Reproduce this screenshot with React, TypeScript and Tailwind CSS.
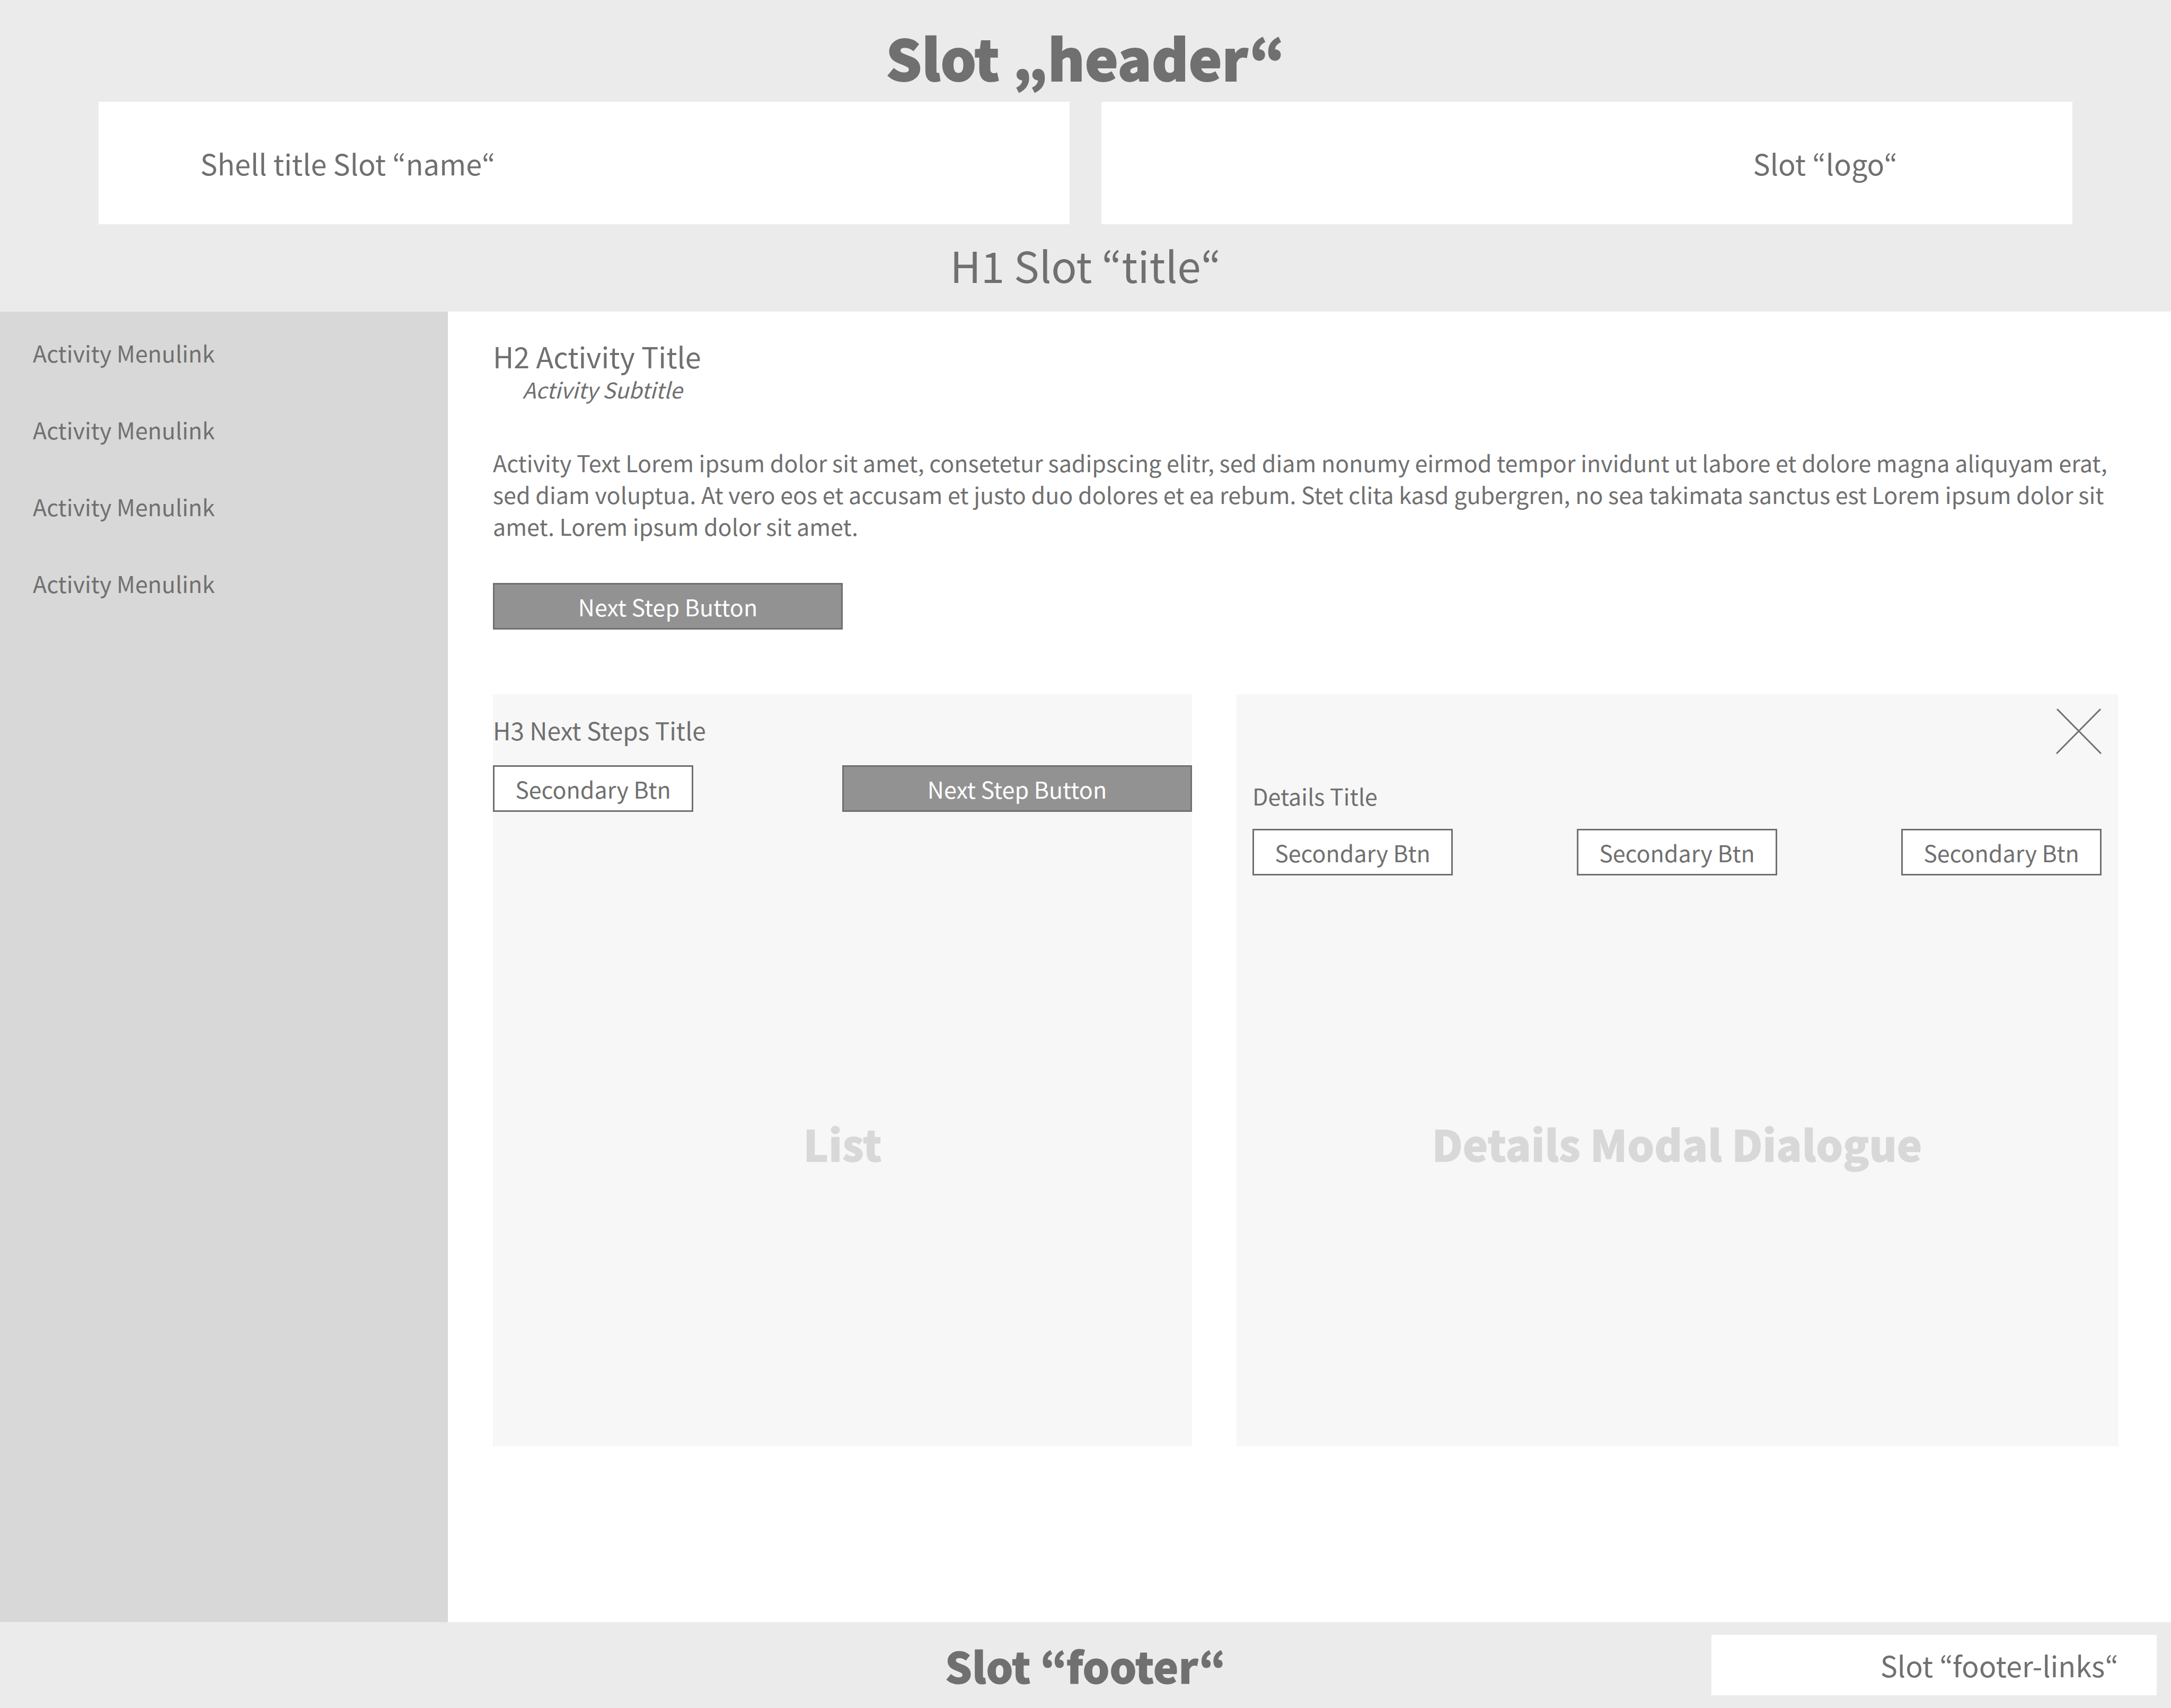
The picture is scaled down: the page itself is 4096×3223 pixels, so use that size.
import type { ReactNode } from "react";

function PrimaryButton({ children }: { children: ReactNode }) {
  return (
    <button type="button" className="h-[88px] w-[660px] border-3 border-[#707070] bg-[#929292] text-white">
      {children}
    </button>
  );
}

function SecondaryButton({ children }: { children: ReactNode }) {
  return (
    <button type="button" className="h-[88px] w-[378px] border-3 border-[#707070] bg-white">
      {children}
    </button>
  );
}

function CloseIcon() {
  return (
    <svg viewBox="0 0 86 86" className="size-[86px]" fill="none" stroke="currentColor" strokeWidth="3" aria-hidden="true">
      <path d="M2 1 85 85M84 1 1 85" />
    </svg>
  );
}

const links = ["first", "second", "third", "fourth"];

export default function App() {
  return (
    <div className="flex min-h-screen flex-col bg-white font-['Noto_Sans_CJK_KR','Noto_Sans',sans-serif] text-[43px] leading-[60px] text-[#707070]">
      <header className="bg-[#ebebeb] px-[186px] pt-[42px] pb-[39px] text-center">
        <p className="text-[106px] leading-[130px] font-black [-webkit-text-stroke:2px_#707070]">Slot „header“</p>
        <div className="mt-5 grid grid-cols-2 gap-[60px] text-[54px] leading-[58px]">
          <div className="flex h-[231px] items-center bg-white pl-[192px]">Shell title Slot “name“</div>
          <div className="flex h-[231px] items-center justify-end bg-white pr-[330px]">Slot “logo“</div>
        </div>
        <h1 className="mt-[26px] text-[80px] leading-[100px]">H1 Slot “title“</h1>
      </header>

      <div className="flex flex-1">
        <nav className="flex w-[845px] shrink-0 flex-col items-start gap-[85px] bg-[#d8d8d8] px-[62px] pt-[47px]">
          {links.map((id) => (
            <a key={id} href={"#" + id}>
              Activity Menulink
            </a>
          ))}
        </nav>

        <main className="flex min-w-0 flex-1 flex-col pt-[52px] pr-[99px] pb-[332px] pl-[85px]">
          <h2 className="text-[54px] leading-[64px]">H2 Activity Title</h2>
          <p className="pl-[56px] text-[41px] italic">Activity Subtitle</p>
          <p className="mt-[78px]">
            Activity Text Lorem ipsum dolor sit amet, consetetur sadipscing elitr, sed diam nonumy eirmod tempor
            invidunt ut labore et dolore magna aliquyam erat, sed diam voluptua. At vero eos et accusam et justo duo
            dolores et ea rebum. Stet clita kasd gubergren, no sea takimata sanctus est Lorem ipsum dolor sit amet.
            Lorem ipsum dolor sit amet.
          </p>
          <div className="mt-[78px]">
            <PrimaryButton>Next Step Button</PrimaryButton>
          </div>

          <div className="mt-[122px] flex flex-1 gap-[84px]">
            <section className="flex w-[1319px] flex-col bg-[#f7f7f7] pt-[37px]">
              <h3 className="text-[46px]">H3 Next Steps Title</h3>
              <div className="mt-[37px] flex justify-between">
                <SecondaryButton>Secondary Btn</SecondaryButton>
                <PrimaryButton>Next Step Button</PrimaryButton>
              </div>
              <p className="mt-[575px] text-center text-[80px] leading-[100px] font-black text-[#d8d8d8] [-webkit-text-stroke:1px_#d8d8d8]">
                List
              </p>
            </section>

            <section className="flex flex-1 flex-col bg-[#f7f7f7] pt-[27px] pr-[32px] pl-[30px]">
              <button type="button" aria-label="Close" className="self-end">
                <CloseIcon />
              </button>
              <h3 className="mt-[48px]">Details Title</h3>
              <div className="mt-[33px] flex justify-between">
                <SecondaryButton>Secondary Btn</SecondaryButton>
                <SecondaryButton>Secondary Btn</SecondaryButton>
                <SecondaryButton>Secondary Btn</SecondaryButton>
              </div>
              <p className="mt-[455px] text-center text-[80px] leading-[100px] font-black text-[#d8d8d8] [-webkit-text-stroke:1px_#d8d8d8]">
                Details Modal Dialogue
              </p>
            </section>
          </div>
        </main>
      </div>

      <footer className="grid grid-cols-[1fr_auto_1fr] items-center bg-[#ebebeb] px-[27px] py-[24px]">
        <p className="col-start-2 text-[80px] leading-[100px] font-black [-webkit-text-stroke:1px_#707070]">
          Slot “footer“
        </p>
        <div className="flex h-[114px] w-[840px] items-center justify-end justify-self-end bg-white pr-[72px] text-[54px]">
          Slot “footer-links“
        </div>
      </footer>
    </div>
  );
}
